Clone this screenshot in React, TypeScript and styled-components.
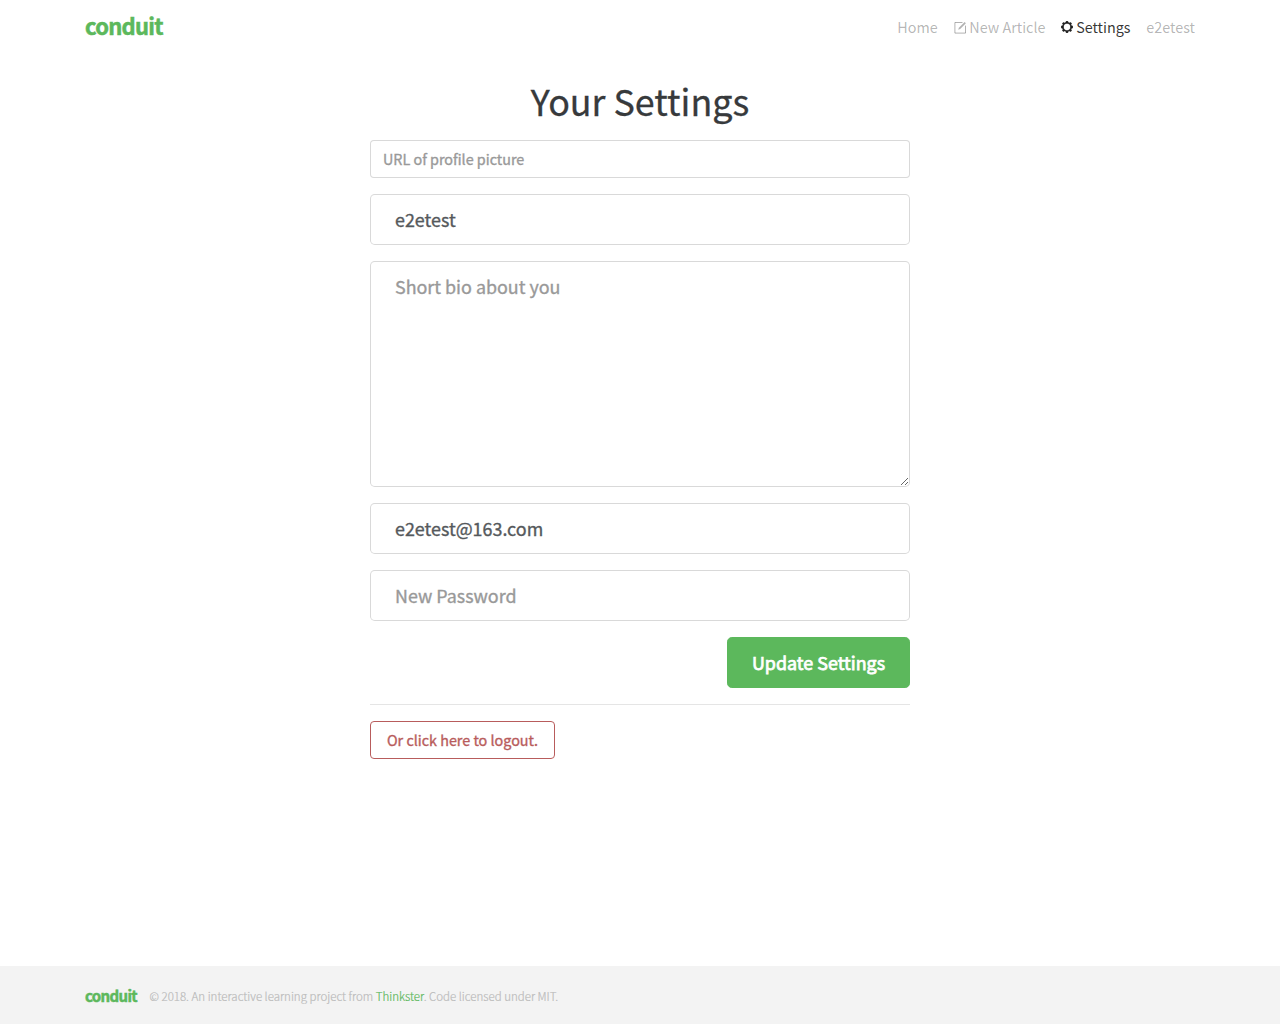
import React from "react";
import styled, { createGlobalStyle } from "styled-components";

const GlobalStyle = createGlobalStyle`
  *, *::before, *::after { box-sizing: border-box; }
  body {
    margin: 0;
    background: #fff;
    color: #373a3c;
    font-family: "Noto Sans CJK SC", "Noto Sans", sans-serif;
    font-size: 14.35px;
    line-height: 24px;
  }
`;

const Page = styled.div`
  min-height: 1024px;
  display: flex;
  flex-direction: column;
`;

const Container = styled.div`
  width: 1140px;
  margin: 0 auto;
  padding: 0 15px;
  display: flex;
  align-items: center;
`;

const Navbar = styled.nav`
  height: 54px;
  display: flex;
`;

const Brand = styled.a<{ $size: number; $spacing: number; $lift?: number }>`
  color: #5cb85c;
  font-family: "Noto Sans CJK SC", "Noto Sans", sans-serif;
  font-weight: 700;
  -webkit-text-stroke: 0.5px currentColor;
  font-size: ${(p) => p.$size}px;
  letter-spacing: ${(p) => p.$spacing}px;
  line-height: 24px;
  padding-bottom: ${(p) => p.$lift ?? 0}px;
`;

const NavList = styled.div`
  margin-left: auto;
  display: flex;
  gap: 15.9px;
`;

const NavLink = styled.a<{ $active?: boolean }>`
  display: flex;
  align-items: center;
  gap: 2.8px;
  color: ${(p) => (p.$active ? "rgba(0, 0, 0, 0.8)" : "rgba(0, 0, 0, 0.3)")};
  white-space: nowrap;
`;

const Main = styled.main`
  flex: 1;
  width: 540px;
  margin: 24px auto 0;
  display: flex;
  flex-direction: column;
`;

const Title = styled.h1`
  margin: 0 0 18px;
  font-size: 35.85px;
  font-weight: 400;
  -webkit-text-stroke: 0.3px currentColor;
  line-height: 44px;
  text-align: center;
`;

const Form = styled.form`
  display: flex;
  flex-direction: column;
  gap: 16px;
`;

const Input = styled.input<{ $large?: boolean }>`
  width: 100%;
  height: ${(p) => (p.$large ? 51 : 38)}px;
  padding: ${(p) => (p.$large ? "0 24px 2px" : "0 12px 2px")};
  border: 1px solid rgba(0, 0, 0, 0.15);
  border-radius: ${(p) => (p.$large ? 4.8 : 4)}px;
  background: #fff;
  color: #55595c;
  font-family: inherit;
  font-size: ${(p) => (p.$large ? 17.9 : 14.35)}px;
  font-weight: 400;
  -webkit-text-stroke: 0.35px currentColor;
  outline: none;
  &::placeholder { color: #999; opacity: 1; }
`;

const Bio = styled.textarea`
  display: block;
  width: 100%;
  height: 226px;
  padding: 12px 24px;
  border: 1px solid rgba(0, 0, 0, 0.15);
  border-radius: 4.8px;
  color: #55595c;
  font-family: inherit;
  font-size: 17.9px;
  font-weight: 400;
  -webkit-text-stroke: 0.35px currentColor;
  line-height: 25px;
  resize: vertical;
  outline: none;
  &::placeholder { color: #999; opacity: 1; }
`;

const SubmitButton = styled.button`
  align-self: flex-end;
  width: 183px;
  height: 51px;
  padding: 0 0 2px;
  border: 1px solid #5cb85c;
  border-radius: 4.8px;
  background: #5cb85c;
  color: #fff;
  font-family: inherit;
  font-size: 17.9px;
  font-weight: 400;
  -webkit-text-stroke: 0.75px currentColor;
  white-space: nowrap;
`;

const Divider = styled.hr`
  width: 100%;
  margin: 16px 0;
  border: 0;
  border-top: 1px solid rgba(0, 0, 0, 0.1);
`;

const LogoutButton = styled.button`
  align-self: flex-start;
  width: 185px;
  height: 38px;
  padding: 0 0 2px;
  border: 1px solid #b85c5c;
  border-radius: 4px;
  background: transparent;
  color: #b85c5c;
  font-family: inherit;
  font-size: 14.35px;
  font-weight: 400;
  -webkit-text-stroke: 0.35px currentColor;
  white-space: nowrap;
`;

const Footer = styled.footer`
  height: 58px;
  display: flex;
  background: #f3f3f3;
  padding-top: 1px;
`;

const Attribution = styled.span`
  margin-left: 12.5px;
  color: #bbb;
  font-size: 11.5px;
  font-weight: 300;
  -webkit-text-stroke: 0.2px currentColor;
  white-space: nowrap;
  a { color: #5cb85c; }
`;

const ComposeIcon = () => (
  <svg width="13" height="13" viewBox="0 0 13 13" fill="none" stroke="currentColor">
    <path d="M8.5 1.5H.9v10.6h10.6V4.6" />
    <path d="M4.2 8.8l.7-2L10.6.9l1.3 1.3-5.7 5.9z" fill="currentColor" stroke="none" />
  </svg>
);

const GearIcon = () => (
  <svg width="12" height="12" viewBox="0 0 12 12" fill="none" stroke="currentColor">
    <circle cx="6" cy="6" r="4.1" strokeWidth="1.9" />
    <g strokeWidth="2.3">
      {[0, 45, 90, 135, 180, 225, 270, 315].map((angle) => (
        <path key={angle} d="M6 0v1.7" transform={`rotate(${angle} 6 6)`} />
      ))}
    </g>
  </svg>
);

export default function App() {
  return (
    <Page>
      <GlobalStyle />
      <Navbar>
        <Container>
          <Brand $size={22} $spacing={-0.75} $lift={4}>conduit</Brand>
          <NavList>
            <NavLink>Home</NavLink>
            <NavLink><ComposeIcon />New Article</NavLink>
            <NavLink $active><GearIcon />Settings</NavLink>
            <NavLink>e2etest</NavLink>
          </NavList>
        </Container>
      </Navbar>
      <Main>
        <Title>Your Settings</Title>
        <Form>
          <Input placeholder="URL of profile picture" />
          <Input $large defaultValue="e2etest" />
          <Bio placeholder="Short bio about you" />
          <Input $large defaultValue="e2etest@163.com" />
          <Input $large type="password" placeholder="New Password" />
          <SubmitButton type="button">Update Settings</SubmitButton>
        </Form>
        <Divider />
        <LogoutButton>Or click here to logout.</LogoutButton>
      </Main>
      <Footer>
        <Container>
          <Brand $size={15} $spacing={-0.65}>conduit</Brand>
          <Attribution>
            © 2018. An interactive learning project from <a>Thinkster</a>. Code licensed under MIT.
          </Attribution>
        </Container>
      </Footer>
    </Page>
  );
}
